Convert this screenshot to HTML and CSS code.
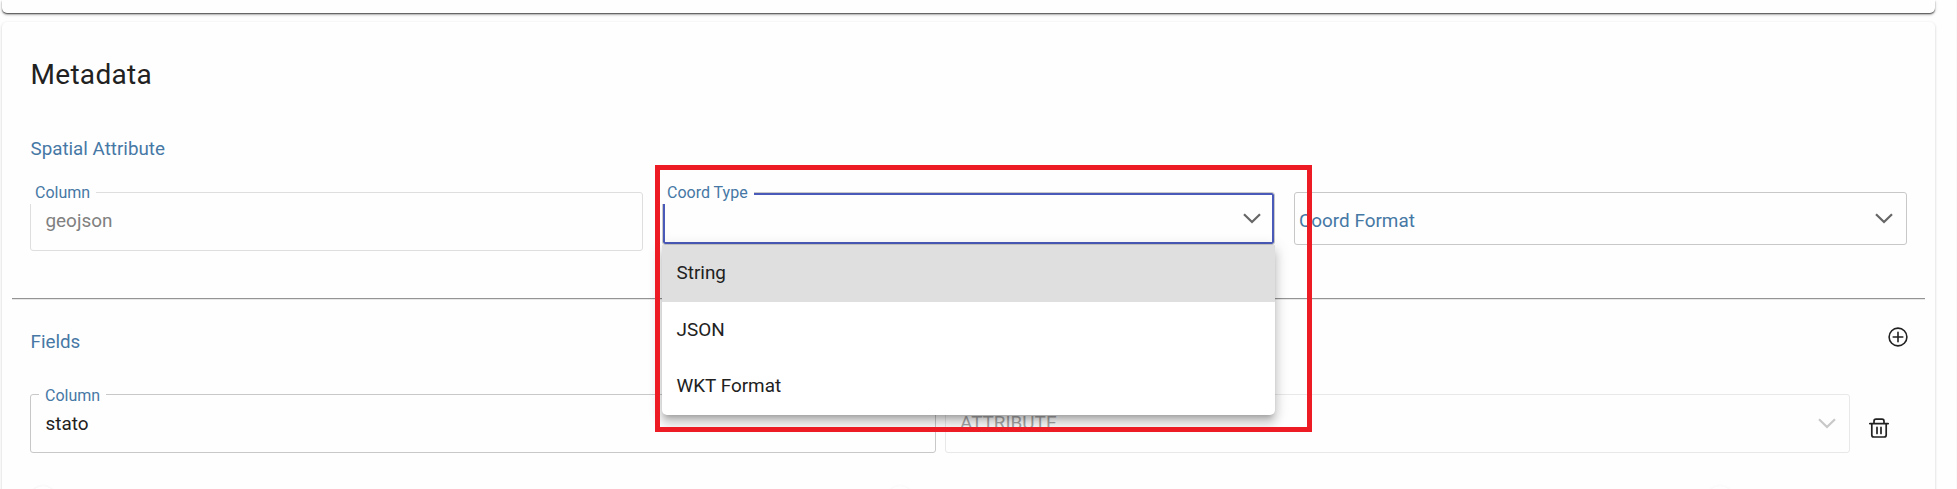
FILE: index.html
```html
<!DOCTYPE html>
<html lang="en">
<head>
<meta charset="utf-8">
<title>Metadata</title>
<link rel="stylesheet" href="styles.css">
</head>
<body>
<main class="page">
  <section class="card card-previous"></section>
  <section class="card card-metadata">
    <h1 class="title">Metadata</h1>
    <h2 class="subtitle">Spatial Attribute</h2>
    <div class="spatial-row">
      <div class="field field-readonly">
        <span class="label label-flush">Column</span>
        <span class="value">geojson</span>
      </div>
      <div class="field select select-focused">
        <span class="label label-flush">Coord Type</span>
        <svg class="chevron" viewBox="0 0 18 11"><path d="M1 1.2 9 9l8-7.8"/></svg>
        <ul class="menu">
          <li class="option option-active">String</li>
          <li class="option">JSON</li>
          <li class="option">WKT Format</li>
        </ul>
        <div class="highlight"></div>
      </div>
      <div class="field select">
        <span class="placeholder">Coord Format</span>
        <svg class="chevron" viewBox="0 0 18 11"><path d="M1 1.2 9 9l8-7.8"/></svg>
      </div>
    </div>
    <hr class="divider">
    <header class="fields-header">
      <h2 class="subtitle">Fields</h2>
      <svg class="add" viewBox="0 0 20 20"><circle cx="10" cy="10" r="8.9"/><path d="M10 5.2v9.6M5.2 10h9.6"/></svg>
    </header>
    <div class="fields-row">
      <div class="field">
        <span class="label label-notched">Column</span>
        <span class="value">stato</span>
      </div>
      <div class="field field-disabled">
        <span class="value">ATTRIBUTE</span>
        <svg class="chevron" viewBox="0 0 18 11"><path d="M1 1.2 9 9l8-7.8"/></svg>
      </div>
      <svg class="trash" viewBox="0 0 20 20"><path d="M.8 5.6h18.4M5 5V3.2Q5 1.2 7 1.2h6q2 0 2 2V5M2.8 6v11q0 2 2 2h10.4q2 0 2-2V6M8 9.4v6M12 9.4v6"/></svg>
    </div>
    <div class="toggles"><i class="knob"></i><i class="knob"></i><i class="knob"></i></div>
  </section>
</main>
</body>
</html>
```
FILE: styles.css
```css
* { box-sizing: border-box; }
body {
  margin: 0;
  height: 489px;
  overflow: hidden;
  background: #fefefe;
  color: #212121;
  font: 18.9px/24px Roboto, sans-serif;
}
.page { padding: 0 21px 0 2px; border-right: 1px solid #f9f9f9; }
.card { background: #fefefe; border-radius: 5px; }
.card-previous {
  height: 13px;
  border-radius: 0 0 5px 5px;
  box-shadow: 0 1px 1px rgba(0,0,0,.5), 0 2px 2px rgba(0,0,0,.22), 0 1px 4px rgba(0,0,0,.12);
}
.card-metadata {
  margin-top: 9px;
  height: 490px;
  padding: 35px 28px 0;
  box-shadow: 0 1px 3px rgba(0,0,0,.2);
}
.title { margin: 0; padding-left: .5px; font-size: 28px; font-weight: 400; line-height: 36px; letter-spacing: .3px; }
.subtitle { margin: 0; padding-left: .5px; font-size: 18.8px; font-weight: 400; line-height: 24px; color: #4678a5; }
.title + .subtitle { margin-top: 44px; }

.spatial-row { display: grid; grid-template-columns: repeat(3, 1fr); gap: 19px; margin-top: 31px; align-items: start; }
.field { position: relative; height: 59px; border: 1px solid #c8c8c8; border-radius: 3px; display: flex; align-items: center; padding: 0 13px 0 14.5px; }
.field-readonly { border-color: #dedede; color: #808080; }
.field-readonly .value { margin-bottom: 2px; }
.select { height: 53px; padding: 0 13px 0 4px; }
.select-focused { box-shadow: inset 0 0 0 2px #4a5ab9; }
.label { position: absolute; color: #4678a5; background: #fefefe; font-size: 16px; line-height: 24px; }
.label-flush { left: -1px; top: -12px; height: 23px; padding: 0 6px 0 5px; }
.label-notched { left: 8px; top: -11px; padding: 0 6px; }
.placeholder { margin-top: 4px; color: #4678a5; }
.chevron { width: 18px; height: 11px; margin: 0 0 1px auto; fill: none; stroke: #666; stroke-width: 2.2; }

.menu { position: absolute; z-index: 2; left: -1px; top: 52px; width: 613px; margin: 0; padding: 0 0 .5px; list-style: none; background: #fff; border-radius: 0 0 5px 5px; box-shadow: 0 5px 5px -3px rgba(0,0,0,.2), 0 8px 10px 1px rgba(0,0,0,.14), 0 3px 14px 2px rgba(0,0,0,.12); }
.option { height: 56.5px; padding: 0 14.5px; line-height: 56px; }
.option-active { background: #dfdfdf; }
.highlight { position: absolute; z-index: 3; left: -8px; top: -28px; width: 657px; height: 267px; border: 5px solid #ed1c24; }

.divider { height: 2px; margin: 47px -18px 0; border: 0; border-bottom: 1px solid #e8e8e8; background: #949494; }
.fields-header { display: flex; justify-content: space-between; margin-top: 30px; }
.add { width: 20px; height: 20px; margin: -3px -1px 0 0; fill: none; stroke: #212121; stroke-width: 1.6; stroke-linecap: round; }
.fields-row { display: grid; grid-template-columns: 1fr 1fr 30px; column-gap: 9px; margin: 40px 18px 0 0; align-items: center; }
.field-disabled { border-color: #e8e8e8; color: #a6a6a6; }
.field-disabled .value { margin-bottom: 2px; }
.field-disabled .chevron { stroke: #c8c8c8; }
.trash { width: 20px; height: 20px; margin-top: 8px; justify-self: end; fill: none; stroke: #212121; stroke-width: 1.7; stroke-linecap: round; }
.toggles { display: flex; margin-top: 33px; }
.knob { width: 26px; height: 26px; border-radius: 50%; background: #fff; box-shadow: 0 1px 3px rgba(0,0,0,.15); }
.knob:nth-child(2) { margin-left: 831px; opacity: .5; }
.knob:nth-child(3) { margin-left: 794px; opacity: .5; }
```
